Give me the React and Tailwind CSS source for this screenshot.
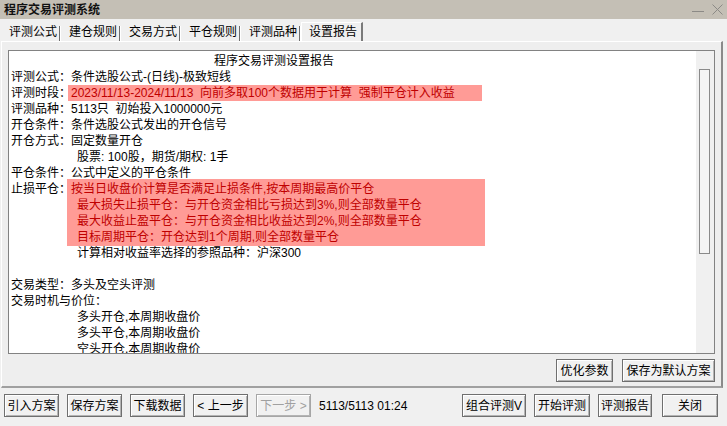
import React from 'react';

const FONT = { fontFamily: '"Liberation Sans", "Noto Sans CJK SC", sans-serif' };

const tabs = ['评测公式', '建仓规则', '交易方式', '平仓规则', '评测品种', '设置报告'];

// classic win32 push button
const Btn = ({ w, children, disabled, className = '' }) => (
  <div
    className={`flex h-[23px] items-center justify-center border bg-[#f1f1f1] text-[12px] leading-none shadow-[inset_1px_1px_0_#ffffff,inset_-1px_-1px_0_#b4b4b4] ${
      disabled ? 'border-[#a6a6a6] text-[#a0a0a0]' : 'border-[#6f6f6f] text-black'
    } ${w} ${className}`}
  >
    {children}
  </div>
);

const Line = ({ children, className = '' }) => (
  <div className={`h-[16px] whitespace-nowrap leading-[16px] ${className}`}>{children}</div>
);

const Label = ({ children }) => <span className="inline-block w-[60px] shrink-0">{children}</span>;

export default function App() {
  return (
    <div className="flex h-[426px] w-[727px] flex-col overflow-hidden bg-[#f0f0f0] text-black" style={FONT}>
      {/* title bar */}
      <div className="flex h-[19px] items-center bg-[#c4bfb5] pl-[4px] pr-[4px]">
        <span className="text-[12px] font-bold leading-none text-[#111]">程序交易评测系统</span>
        <div className="ml-auto flex items-center gap-[8px]">
          <svg width="12" height="12" viewBox="0 0 12 12">
            <line x1="0" y1="7.5" x2="12" y2="7.5" stroke="#8c8a86" strokeWidth="1" />
          </svg>
          <svg width="11" height="11" viewBox="0 0 11 11">
            <line x1="0.5" y1="0.5" x2="10.5" y2="10.5" stroke="#8c8a86" strokeWidth="1" />
            <line x1="10.5" y1="0.5" x2="0.5" y2="10.5" stroke="#8c8a86" strokeWidth="1" />
          </svg>
        </div>
      </div>

      {/* tabs */}
      <div className="flex h-[22px] items-end pl-[1px]">
        {tabs.map((t, i) =>
          i === tabs.length - 1 ? (
            <div
              key={t}
              className="flex h-[19px] w-[62px] items-center border-l border-r-2 border-t border-l-white border-r-[#7a7a7a] border-t-white pl-[7px] text-[12px] leading-none"
            >
              {t}
            </div>
          ) : (
            <div key={t} className="flex h-[19px] w-[60px] items-center pl-[8px] text-[12px] leading-none">
              <span>{t}</span>
              <span className="ml-auto mt-[4px] h-[15px] w-[2px] border-l border-r border-l-[#6e6e6e] border-r-white" />
            </div>
          )
        )}
      </div>

      {/* panel */}
      <div className="ml-[1px] flex w-[722px] flex-col border-b-2 border-l border-r-2 border-t border-b-[#a0a0a0] border-l-white border-r-[#8a8a8a] border-t-white bg-[#eeeeee] px-[6px] pb-[4px] pt-[8px]">
        <div className="flex h-[304px] border border-[#828282] bg-white">
          <div className="flex-1 overflow-hidden pl-[2px] pt-[2px] text-[12px]">
            <Line className="pl-[203px]">程序交易评测设置报告</Line>
            <Line>
              <Label>评测公式：</Label>条件选股公式-(日线)-极致短线
            </Line>
            <Line className="flex">
              <Label>评测时段：</Label>
              <div className="-ml-[3px] w-[414px] bg-[#ff9b96] pl-[3px] text-[#c00000]">
                2023/11/13-2024/11/13&nbsp; 向前多取100个数据用于计算&nbsp; 强制平仓计入收益
              </div>
            </Line>
            <Line>
              <Label>评测品种：</Label>5113只&nbsp; 初始投入1000000元
            </Line>
            <Line>
              <Label>开仓条件：</Label>条件选股公式发出的开仓信号
            </Line>
            <Line>
              <Label>开仓方式：</Label>固定数量开仓
            </Line>
            <Line className="pl-[66px]">股票: 100股，期货/期权: 1手</Line>
            <Line>
              <Label>平仓条件：</Label>公式中定义的平仓条件
            </Line>
            <div className="flex">
              <div className="h-[16px] leading-[16px]">
                <Label>止损平仓：</Label>
              </div>
              <div className="-ml-[4px] -mt-[2px] w-[418px] bg-[#ff9b96] pb-[1px] pl-[4px] pt-[2px] text-[#c00000]">
                <Line>按当日收盘价计算是否满足止损条件,按本周期最高价平仓</Line>
                <Line className="pl-[6px]">最大损失止损平仓：与开仓资金相比亏损达到3%,则全部数量平仓</Line>
                <Line className="pl-[6px]">最大收益止盈平仓：与开仓资金相比收益达到2%,则全部数量平仓</Line>
                <Line className="pl-[6px]">目标周期平仓：开仓达到1个周期,则全部数量平仓</Line>
              </div>
            </div>
            <Line className="-mt-[1px] pl-[66px]">计算相对收益率选择的参照品种：沪深300</Line>
            <Line />
            <Line>
              <Label>交易类型：</Label>多头及空头评测
            </Line>
            <Line>交易时机与价位：</Line>
            <Line className="pl-[66px]">多头开仓,本周期收盘价</Line>
            <Line className="pl-[66px]">多头平仓,本周期收盘价</Line>
            <Line className="pl-[66px]">空头开仓,本周期收盘价</Line>
          </div>
          {/* scrollbar */}
          <div className="w-[18px] bg-[#f0f0f0] pl-[3px] pt-[18px]">
            <div className="h-[185px] w-[11px] border border-[#8a8a8a] bg-[#f4f4f4]" />
          </div>
        </div>
        <div className="mt-[5px] flex justify-end gap-[9px]">
          <Btn w="w-[57px]" className="h-[22px]">优化参数</Btn>
          <Btn w="w-[93px]" className="h-[22px]">保存为默认方案</Btn>
        </div>
      </div>

      {/* bottom bar */}
      <div className="mt-[6px] flex items-center pl-[4px] pr-[9px]">
        <div className="flex items-center gap-[8px]">
          <Btn w="w-[55px]">引入方案</Btn>
          <Btn w="w-[55px]">保存方案</Btn>
          <Btn w="w-[55px]">下载数据</Btn>
          <Btn w="w-[55px]">&lt; 上一步</Btn>
          <Btn w="w-[55px]" disabled>下一步 &gt;</Btn>
          <span className="text-[12px]">5113/5113 01:24</span>
        </div>
        <div className="ml-auto flex items-center">
          <Btn w="w-[64px]">组合评测V</Btn>
          <Btn w="w-[56px]" className="ml-[8px]">开始评测</Btn>
          <Btn w="w-[54px]" className="ml-[8px]">评测报告</Btn>
          <Btn w="w-[56px]" className="ml-[10px]">关闭</Btn>
        </div>
      </div>
    </div>
  );
}
